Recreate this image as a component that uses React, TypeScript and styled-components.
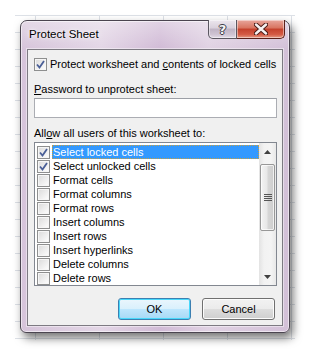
import React from 'react';
import styled, { createGlobalStyle } from 'styled-components';

const Global = createGlobalStyle`
  html, body { margin: 0; padding: 0; background: #fff; }
  body {
    font-family: 'Liberation Sans', Arial, sans-serif;
    font-size: 11px;
    color: #000;
  }
  * { box-sizing: border-box; }
`;

const Screen = styled.div`
  width: 310px;
  height: 355px;
  overflow: hidden;
  background: #fff;
  padding: 15px 0 0 15px;
`;

const Sheet = styled.div`
  width: 280px;
  height: 325px;
  padding: 5px 0 0 5px;
  background-color: #fff;
  background-image:
    linear-gradient(to right, #dde1e7 1px, transparent 1px),
    linear-gradient(to bottom, #dde1e7 1px, transparent 1px);
  background-size: 64px 100%, 100% 17px;
  background-position: 20px 0, 0 0;
`;

const Dialog = styled.div`
  width: 270px;
  height: 313px;
  display: flex;
  flex-direction: column;
  border: 1px solid #4b4550;
  border-radius: 7px 7px 6px 6px;
  background:
    linear-gradient(to bottom, rgba(255, 255, 255, 0.35), rgba(255, 255, 255, 0) 28px),
    linear-gradient(to right, #d6c4da 0%, #e3d6e6 30%, #d1bbd6 52%, #e0d2e3 70%, #d3c0d8 100%);
  box-shadow:
    inset 0 0 0 1px rgba(255, 255, 255, 0.55),
    3px 5px 10px rgba(0, 0, 0, 0.55);
`;

const TitleBar = styled.div`
  height: 28px;
  display: flex;
  align-items: flex-start;
  padding: 0 4px 0 8px;
`;

const Title = styled.div`
  flex: 1;
  padding-top: 6px;
  line-height: 15px;
  font-size: 11.5px;
  text-shadow: 0 0 6px #fff, 0 0 3px #fff;
`;

const CaptionButtons = styled.div`
  display: flex;
  margin-top: -1px;
  height: 19px;
`;

const CaptionButton = styled.div<{ $close?: boolean }>`
  width: ${p => (p.$close ? 48 : 29)}px;
  height: 19px;
  display: flex;
  align-items: center;
  justify-content: center;
  border: 1px solid ${p => (p.$close ? '#5a1f19' : '#5b5761')};
  border-top: none;
  ${p => (p.$close ? 'border-left: none;' : '')}
  border-radius: ${p => (p.$close ? '0 0 5px 0' : '0 0 0 5px')};
  background: ${p =>
    p.$close
      ? 'linear-gradient(to bottom, #e8a69c 0%, #d8735f 45%, #c4402c 50%, #d45a44 80%, #e49a84 100%)'
      : 'linear-gradient(to bottom, #ece6ee 0%, #d9d0dc 45%, #bfb3c4 50%, #cfc4d3 80%, #e3dbe6 100%)'};
  box-shadow: inset 0 0 0 1px rgba(255, 255, 255, 0.45);
`;

const HelpGlyph = styled.span`
  font-family: 'DejaVu Sans', sans-serif;
  font-weight: bold;
  font-size: 13px;
  line-height: 13px;
  color: #f4f4f6;
  text-shadow: 1px 0 0 #3d3a44, -1px 0 0 #3d3a44, 0 1px 0 #3d3a44, 0 -1px 0 #3d3a44;
`;

const Client = styled.div`
  flex: 1;
  margin: 0 6px 6px 6px;
  border: 1px solid #7d7a82;
  background: #f0f0f0;
  padding: 7px 5px 0 6px;
  display: flex;
  flex-direction: column;
  box-shadow: 0 0 0 1px rgba(255, 255, 255, 0.45);
`;

const CheckRow = styled.label`
  display: flex;
  align-items: center;
  height: 15px;
  gap: 3px;
  line-height: 15px;
  white-space: nowrap;
`;

const Box = styled.span`
  width: 13px;
  height: 13px;
  flex: none;
  border: 1px solid #8e8f8f;
  background: linear-gradient(135deg, #dadada 0%, #f4f4f4 70%, #ffffff 100%);
  box-shadow: inset 0 0 0 1px #f6f6f6;
  display: flex;
  align-items: center;
  justify-content: center;
`;

const FieldLabel = styled.div<{ $top: number }>`
  margin-top: ${p => p.$top}px;
  line-height: 15px;
  height: 15px;
  white-space: nowrap;
`;

const Input = styled.div`
  margin-top: 1px;
  width: 243px;
  height: 20px;
  border: 1px solid #abadb3;
  border-top-color: #9c9fa6;
  background: #fff;
`;

const List = styled.div`
  margin-top: 1px;
  width: 243px;
  height: 144px;
  border: 1px solid #828790;
  background: #fff;
  display: flex;
`;

const Items = styled.div`
  flex: 1;
  padding: 2px 0 0 2px;
  display: flex;
  flex-direction: column;
  overflow: hidden;
`;

const Item = styled.div`
  display: flex;
  align-items: center;
  height: 14px;
  flex: none;
`;

const ItemText = styled.span<{ $selected?: boolean }>`
  flex: 1;
  height: 14px;
  margin-left: 2px;
  padding-left: 1px;
  line-height: 14px;
  white-space: nowrap;
  color: ${p => (p.$selected ? '#fff' : '#000')};
  background: ${p => (p.$selected ? '#3399ff' : 'transparent')};
  outline: ${p => (p.$selected ? '1px dotted #c9a040' : 'none')};
  outline-offset: -1px;
`;

const ScrollBar = styled.div`
  width: 17px;
  display: flex;
  flex-direction: column;
  background: linear-gradient(to right, #e3e3e3, #f2f2f2 30%, #f4f4f4 70%, #e8e8e8);
`;

const ArrowButton = styled.div`
  height: 17px;
  display: flex;
  align-items: center;
  justify-content: center;
`;

const Track = styled.div`
  flex: 1;
  padding: 4px 1px 0 1px;
`;

const Thumb = styled.div`
  height: 67px;
  border: 1px solid #979797;
  border-radius: 2px;
  background: linear-gradient(to right, #f3f3f3 0%, #e8e8e8 45%, #d6d6d6 55%, #cdcdcd 100%);
  box-shadow: inset 0 0 0 1px rgba(255, 255, 255, 0.7);
  display: flex;
  align-items: center;
  justify-content: center;
`;

const Buttons = styled.div`
  margin-top: 12px;
  margin-right: 2px;
  display: flex;
  justify-content: flex-end;
  gap: 11px;
`;

const PushButton = styled.div<{ $default?: boolean }>`
  width: 73px;
  height: 22px;
  display: flex;
  align-items: center;
  justify-content: center;
  border: 1px solid ${p => (p.$default ? '#3c7fb1' : '#707070')};
  border-radius: 3px;
  background: ${p =>
    p.$default
      ? 'linear-gradient(to bottom, #eaf6fd 0%, #d9f0fc 50%, #bee6fd 51%, #a7d9f5 100%)'
      : 'linear-gradient(to bottom, #f2f2f2 0%, #ebebeb 50%, #dddddd 51%, #cfcfcf 100%)'};
  box-shadow: inset 0 0 0 1px ${p => (p.$default ? '#48d8fb' : '#fcfcfc')};
  font-size: 11px;
`;

const Check = () => (
  <svg width="9" height="9" viewBox="0 0 9 9">
    <path d="M1 4.5 L3.5 7.5 L8 1" fill="none" stroke="#4a5f97" strokeWidth="1.8" />
  </svg>
);

const Arrow = ({ up }: { up?: boolean }) => (
  <svg width="7" height="4" viewBox="0 0 7 4">
    <path d={up ? 'M0 4 L3.5 0 L7 4 Z' : 'M0 0 L3.5 4 L7 0 Z'} fill="#404040" />
  </svg>
);

const Grip = () => (
  <svg width="8" height="7" viewBox="0 0 8 7">
    {[0.5, 2.5, 4.5, 6.5].map(y => (
      <path key={y} d={`M0 ${y} H8`} stroke="#555" strokeWidth="1" />
    ))}
  </svg>
);

const CloseGlyph = () => (
  <svg width="14" height="12" viewBox="0 0 14 12">
    <path d="M2 1.5 L12 10.5 M12 1.5 L2 10.5" stroke="#4a1b16" strokeWidth="4.4" strokeLinecap="round" />
    <path d="M2 1.5 L12 10.5 M12 1.5 L2 10.5" stroke="#f6f2f2" strokeWidth="2.4" strokeLinecap="round" />
  </svg>
);

const permissions: { label: string; checked: boolean }[] = [
  { label: 'Select locked cells', checked: true },
  { label: 'Select unlocked cells', checked: true },
  { label: 'Format cells', checked: false },
  { label: 'Format columns', checked: false },
  { label: 'Format rows', checked: false },
  { label: 'Insert columns', checked: false },
  { label: 'Insert rows', checked: false },
  { label: 'Insert hyperlinks', checked: false },
  { label: 'Delete columns', checked: false },
  { label: 'Delete rows', checked: false },
];

export default function App() {
  return (
    <Screen>
      <Global />
      <Sheet>
        <Dialog>
          <TitleBar>
            <Title>Protect Sheet</Title>
            <CaptionButtons>
              <CaptionButton>
                <HelpGlyph>?</HelpGlyph>
              </CaptionButton>
              <CaptionButton $close>
                <CloseGlyph />
              </CaptionButton>
            </CaptionButtons>
          </TitleBar>
          <Client>
            <CheckRow>
              <Box><Check /></Box>
              <span>Protect worksheet and <u>c</u>ontents of locked cells</span>
            </CheckRow>
            <FieldLabel $top={10}><u>P</u>assword to unprotect sheet:</FieldLabel>
            <Input />
            <FieldLabel $top={8}>All<u>o</u>w all users of this worksheet to:</FieldLabel>
            <List>
              <Items>
                {permissions.map((p, i) => (
                  <Item key={p.label}>
                    <Box>{p.checked && <Check />}</Box>
                    <ItemText $selected={i === 0}>{p.label}</ItemText>
                  </Item>
                ))}
              </Items>
              <ScrollBar>
                <ArrowButton><Arrow up /></ArrowButton>
                <Track>
                  <Thumb><Grip /></Thumb>
                </Track>
                <ArrowButton><Arrow /></ArrowButton>
              </ScrollBar>
            </List>
            <Buttons>
              <PushButton $default>OK</PushButton>
              <PushButton>Cancel</PushButton>
            </Buttons>
          </Client>
        </Dialog>
      </Sheet>
    </Screen>
  );
}
